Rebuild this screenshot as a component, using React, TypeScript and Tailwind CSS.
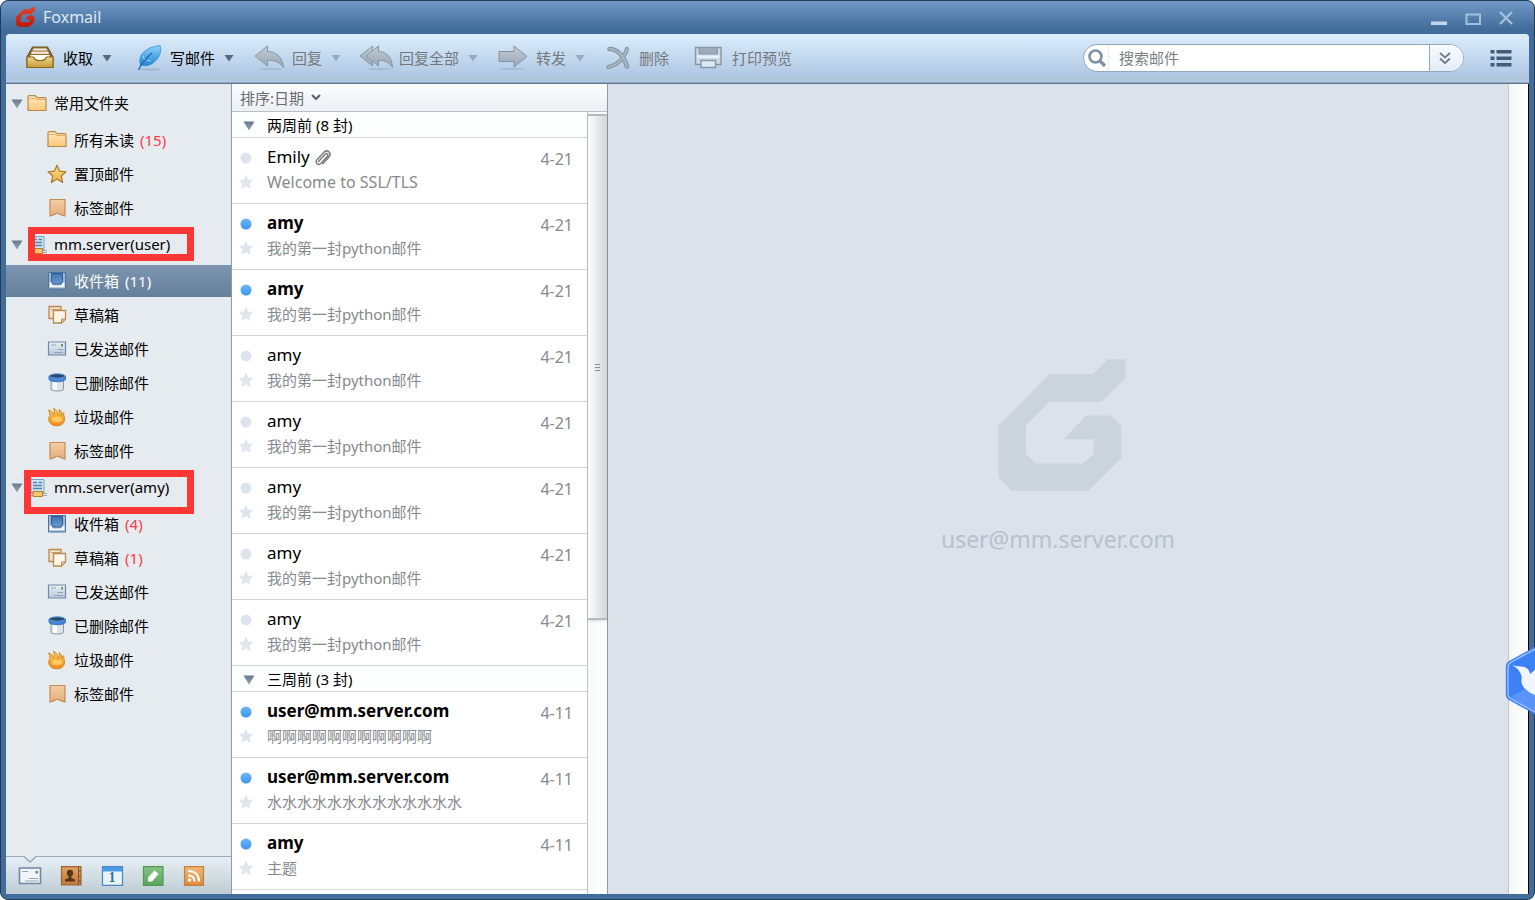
import type { ReactNode } from "react";

const LOGO_PATH =
  "M450 102H580L625 57H678V113L606 184H450L380 255V340L410 369H550L583 340V296H493L560 225H633L665 255V354L566 450H338L298 410V255Z";

function SharedGradients() {
  const stops: [string, string, string][] = [
    ["g-red", "#e8412a", "#c01808"],
    ["g-folder", "#ffe9bd", "#fbc67c"],
    ["g-tag", "#f2cda4", "#e6ae7c"],
    ["g-star", "#fde08c", "#e9b248"],
    ["g-gold", "#efd885", "#c59a3a"],
    ["g-feather", "#8fd2f8", "#1f86d6"],
    ["g-gray", "#c2ccd6", "#98a5b3"],
    ["g-blue", "#3f74b0", "#6a9bd0"],
    ["g-card", "#e9f0f7", "#b8c9dc"],
    ["g-fire", "#fbd04e", "#f08a1c"],
    ["g-dot", "#6db6f8", "#3f95ee"],
    ["g-caret", "#66798b", "#93a4b4"],
    ["g-orange", "#f0b878", "#dc8c3e"],
    ["g-brown", "#dca066", "#c07b3c"],
    ["g-green", "#86c483", "#5ba65c"],
  ];
  return (
    <svg width="0" height="0" className="absolute" aria-hidden="true">
      <defs>
        {stops.map(([id, a, b]) => (
          <linearGradient key={id} id={id} x1="0" y1="0" x2="0" y2="1">
            <stop offset="0" stopColor={a} />
            <stop offset="1" stopColor={b} />
          </linearGradient>
        ))}
      </defs>
    </svg>
  );
}

function Svg({ w, h, children }: { w: number; h: number; children: ReactNode }) {
  return (
    <svg width={w} height={h} viewBox={`0 0 ${w} ${h}`} fill="none" className="shrink-0" aria-hidden="true">
      {children}
    </svg>
  );
}

const Caret = ({ faded = false }: { faded?: boolean }) => (
  <Svg w={10} h={8}>
    <path d="M0.500 1H9.500L5 7.500Z" fill={faded ? "#93acc5" : "#52697f"} />
  </Svg>
);

const TreeCaret = () => (
  <Svg w={12} h={10}>
    <path d="M0.500 0.500H11.500L6 9.500Z" fill="url(#g-caret)" />
  </Svg>
);

/* ---------- toolbar icons ---------- */

const ReceiveIcon = () => (
  <Svg w={30} h={26}>
    <path d="M7.500 2H22.500L28 12V22.500H2V12Z" fill="#8f6a34" stroke="#7a5826" strokeWidth="1.200" strokeLinejoin="round" />
    <path d="M8.500 3.500H21.500L22.500 5.500H7.500Z" fill="#f6efe4" />
    <path d="M7 6.500H23L24 9H6Z" fill="#f3dfd0" />
    <path d="M5.500 10H24.500V16H5.500Z" fill="#fffaf2" />
    <path d="M2 12H8.500C10 17 20 17 21.500 12H28V22.500H2Z" fill="url(#g-gold)" stroke="#8d6722" strokeWidth="1.200" strokeLinejoin="round" />
  </Svg>
);

const FeatherIcon = () => (
  <Svg w={30} h={28}>
    <ellipse cx="18" cy="25.500" rx="11" ry="1.200" fill="#8fa9c4" opacity=".6" />
    <path d="M8.500 21C5.500 12 12 3.500 28 1.500C30.500 7 27 15 21 19C18 21.500 13 22.500 8.500 21Z" fill="url(#g-feather)" stroke="#3b8fcf" strokeWidth=".8" />
    <path d="M6.500 26C9 20 14 14 20 9" stroke="#1d69ad" strokeWidth="1.400" />
    <path d="M11 12L12.500 15.500M19 17L15 16.500" stroke="#bfe6fb" strokeWidth=".8" />
  </Svg>
);

const ReplyIcon = () => (
  <Svg w={30} h={26}>
    <ellipse cx="17" cy="24" rx="11" ry="1" fill="#8fa9c4" opacity=".5" />
    <path d="M1 11L13.500 1V6.500C21 6.500 28.500 11 29.500 22.500C25 16 19.500 15.500 13.500 15.500V21Z" fill="url(#g-gray)" stroke="#8998a8" strokeLinejoin="round" />
  </Svg>
);

const ReplyAllIcon = () => (
  <svg width="34" height="26" viewBox="0 0 34 26" fill="none" className="-mx-0.5 shrink-0" aria-hidden="true">
    <ellipse cx="20" cy="24" rx="12" ry="1" fill="#8fa9c4" opacity=".5" />
    <path d="M1 11L13.500 1V21Z" fill="url(#g-gray)" stroke="#8998a8" strokeLinejoin="round" />
    <path d="M7 11L19.500 1V6.500C27 6.500 33 11.500 33.500 22.500C29 16 25 15.500 19.500 15.500V21Z" fill="url(#g-gray)" stroke="#8998a8" strokeLinejoin="round" />
  </svg>
);

const ForwardIcon = () => (
  <Svg w={30} h={26}>
    <ellipse cx="14" cy="24" rx="12" ry="1" fill="#8fa9c4" opacity=".5" />
    <path d="M1 6.500H16V1L29 11.500L16 22V16.500H1Z" fill="url(#g-gray)" stroke="#8594a4" />
  </Svg>
);

const DeleteIcon = () => (
  <Svg w={26} h={26}>
    <path d="M4.500 4C13 4 19 12 22 21.500" stroke="#8292a2" strokeWidth="4.600" strokeLinecap="round" />
    <path d="M22 4C19 14 12 20 3.500 22" stroke="#8292a2" strokeWidth="4.200" strokeLinecap="round" />
    <path d="M4.500 4C13 4 19 12 22 21.500M22 4C19 14 12 20 3.500 22" stroke="#a5b2bf" strokeWidth="2.600" strokeLinecap="round" />
  </Svg>
);

const PrintIcon = () => (
  <Svg w={34} h={26}>
    <path d="M5.500 2.500H31V19.500H5.500Z" fill="#cbd8e5" stroke="#8797a8" strokeWidth="1.400" />
    <path d="M9 2.500H27.500V9H9Z" fill="#9dacb8" stroke="#8797a8" />
    <path d="M7 10.500H29.500V13H7Z" fill="#e9f1f8" />
    <path d="M11 15.500H25.500V22.500H11Z" fill="#dce8f4" stroke="#8797a8" strokeWidth="1.400" />
  </Svg>
);

/* ---------- tree icons ---------- */

const FolderIcon = () => (
  <Svg w={20} h={18}>
    <path d="M1 15.500V2C1 1 1.500 .7 2.500 .7H8L10 2.700H18C18.700 2.700 19 3 19 3.700V15.500Z" fill="url(#g-folder)" stroke="#ba8a4a" strokeWidth="1.200" />
    <path d="M2 3.500H8.500L9.500 4.500H18" stroke="#e2b06c" />
  </Svg>
);

const StarIcon = () => (
  <Svg w={20} h={20}>
    <path d="M10 1.200L12.600 7.200L19 7.800L14.200 12L15.700 18.500L10 15.100L4.300 18.500L5.800 12L1 7.800L7.400 7.200Z" fill="url(#g-star)" stroke="#a97a33" strokeWidth="1.200" strokeLinejoin="round" />
  </Svg>
);

const TagIcon = () => (
  <Svg w={20} h={20}>
    <path d="M3 1.500H18V18C15 17.500 13 16 10.500 15C8 16 6 17.500 3 18Z" fill="url(#g-tag)" stroke="#c48c58" strokeWidth="1.200" />
  </Svg>
);

const InboxIcon = () => (
  <Svg w={20} h={20}>
    <path d="M1.500 1.500H18.500V18H1.500Z" fill="#9db8d6" stroke="#4a739f" />
    <path d="M4.500 2.500H15.500V10.500L14 13H6L4.500 10.500Z" fill="url(#g-blue)" stroke="#2f5c90" />
    <path d="M2.500 11.500H4L6 14.500H14L16 11.500H17.500V16.500H2.500Z" fill="#f3f7fb" />
    <path d="M3 16.500H17" stroke="#b7c8da" />
  </Svg>
);

const DraftIcon = () => (
  <Svg w={20} h={20}>
    <path d="M2 1.500H14V13.500H2Z" fill="#f3e0c6" stroke="#b98a52" strokeWidth="1.300" />
    <path d="M4 4.500H14" stroke="#c9a070" />
    <path d="M6.500 5.500H18.500V14L14.500 18H6.500Z" fill="#fdf5e8" stroke="#b98a52" strokeWidth="1.300" />
    <path d="M14.500 18V14H18.500Z" fill="#efd4ad" stroke="#b98a52" />
  </Svg>
);

const SentIcon = () => (
  <Svg w={20} h={20}>
    <path d="M1.500 3H18.500V16H1.500Z" fill="url(#g-card)" stroke="#7187a3" strokeWidth="1.200" />
    <path d="M4 6H9M10.500 10.500H16M7 13.500H16" stroke="#8fa3bb" strokeWidth="1.200" />
    <path d="M14 5H16V7.500H14Z" fill="#4ea46a" />
  </Svg>
);

const TrashIcon = () => (
  <Svg w={20} h={20}>
    <path d="M4 7H16.500V16.500C14.500 18.500 6 18.500 4 16.500Z" fill="#dfe4e8" stroke="#8a98a4" />
    <path d="M8 9V17" stroke="#fff" strokeWidth="4" />
    <path d="M2 3H18.500V6.500C16 9.500 4.500 9.500 2 6.500Z" fill="#4586d8" stroke="#2c66b4" strokeWidth=".8" />
    <ellipse cx="10.250" cy="3" rx="7.800" ry="2.200" fill="#294971" stroke="#5c97de" />
  </Svg>
);

const FireIcon = () => (
  <Svg w={20} h={20}>
    <path d="M4.500 17.500C1 14.500 1 11 3 8.500C2.500 6.500 2.500 4.500 1.500 3C4.500 3.500 6 6 6.500 8C7.500 6 7.500 3.500 6.500 1.200C10 3 11 6 11 8.500C12.500 6.500 12.500 4.500 12 2.500C14.500 4 15 6 14.500 8.500C15.500 7.500 16 6 17 5.500C16 8 17.500 9 17.500 12C17.500 14.500 16.500 16.500 14.500 17.800C12 19.200 7 19.200 4.500 17.500Z" fill="url(#g-fire)" stroke="#c98526" strokeWidth=".9" />
    <ellipse cx="10" cy="12.500" rx="5" ry="2.800" fill="#ffe58a" opacity=".6" />
  </Svg>
);

const ServerIcon = () => (
  <Svg w={20} h={20}>
    <path d="M4 1.500H17V14.500H4Z" fill="#cfe3f2" stroke="#7fa0bd" />
    <path d="M6 4.500H10M11.500 4.500H15M6 7.500H15M6 10.500H15" stroke="#5685b0" strokeWidth="1.300" />
    <path d="M1 15.500H20M1 17.500H20" stroke="#9aa7b3" />
    <path d="M6 13.500H15.500V18.500H6Z" fill="#f6c46c" stroke="#b67d2a" />
  </Svg>
);

/* ---------- data ---------- */

type Leaf = { label: string; icon: ReactNode; count?: number; selected?: boolean };

const mailbox = (inbox: number, drafts?: number, selected = false): Leaf[] => [
  { label: "收件箱", icon: <InboxIcon />, count: inbox, selected },
  { label: "草稿箱", icon: <DraftIcon />, count: drafts },
  { label: "已发送邮件", icon: <SentIcon /> },
  { label: "已删除邮件", icon: <TrashIcon /> },
  { label: "垃圾邮件", icon: <FireIcon /> },
  { label: "标签邮件", icon: <TagIcon /> },
];

const groups: { title: string; icon: ReactNode; frame?: string; items: Leaf[] }[] = [
  {
    title: "常用文件夹",
    icon: <FolderIcon />,
    items: [
      { label: "所有未读", icon: <FolderIcon />, count: 15 },
      { label: "置顶邮件", icon: <StarIcon /> },
      { label: "标签邮件", icon: <TagIcon /> },
    ],
  },
  { title: "mm.server(user)", icon: <ServerIcon />, frame: "left-[22px] top-0.5 h-[34px] w-[166px]", items: mailbox(11, undefined, true) },
  { title: "mm.server(amy)", icon: <ServerIcon />, frame: "left-[18px] top-0.5 h-11 w-[170px]", items: mailbox(4, 1) },
];

type Mail = { from: string; subject: string; date: string; unread?: boolean; clip?: boolean };

const first = "我的第一封python邮件";
const sections: { title: string; mails: Mail[] }[] = [
  {
    title: "两周前 (8 封)",
    mails: [
      { from: "Emily", subject: "Welcome to SSL/TLS", date: "4-21", clip: true },
      { from: "amy", subject: first, date: "4-21", unread: true },
      { from: "amy", subject: first, date: "4-21", unread: true },
      { from: "amy", subject: first, date: "4-21" },
      { from: "amy", subject: first, date: "4-21" },
      { from: "amy", subject: first, date: "4-21" },
      { from: "amy", subject: first, date: "4-21" },
      { from: "amy", subject: first, date: "4-21" },
    ],
  },
  {
    title: "三周前 (3 封)",
    mails: [
      { from: "user@mm.server.com", subject: "啊啊啊啊啊啊啊啊啊啊啊", date: "4-11", unread: true },
      { from: "user@mm.server.com", subject: "水水水水水水水水水水水水水", date: "4-11", unread: true },
      { from: "amy", subject: "主题", date: "4-11", unread: true },
    ],
  },
];

const actions: { label: string; icon: ReactNode; caret: boolean; enabled?: boolean }[] = [
  { label: "收取", icon: <ReceiveIcon />, caret: true, enabled: true },
  { label: "写邮件", icon: <FeatherIcon />, caret: true, enabled: true },
  { label: "回复", icon: <ReplyIcon />, caret: true },
  { label: "回复全部", icon: <ReplyAllIcon />, caret: true },
  { label: "转发", icon: <ForwardIcon />, caret: true },
  { label: "删除", icon: <DeleteIcon />, caret: false },
  { label: "打印预览", icon: <PrintIcon />, caret: false },
];

/* ---------- regions ---------- */

function TitleBar() {
  return (
    <header className="flex h-[33px] shrink-0 items-center pr-[15px] pb-0.5 pl-2.5">
      <svg width="19" height="20" viewBox="290 50 396 408" className="mr-2" aria-hidden="true">
        <path d={LOGO_PATH} fill="url(#g-red)" stroke="url(#g-red)" strokeWidth="16" strokeLinejoin="round" />
      </svg>
      <h1 className="flex-1 text-base leading-6 text-[#dfe9f4]">Foxmail</h1>
      <div className="flex items-center gap-4 pt-0.5">
        <button type="button" aria-label="最小化">
          <Svg w={18} h={18}>
            <path d="M1 12.500H17V16H1Z" fill="#c3d5e8" />
          </Svg>
        </button>
        <button type="button" aria-label="最大化">
          <Svg w={18} h={18}>
            <path d="M2.500 5.500H16V15H2.500Z" stroke="#a3bfdc" strokeWidth="2" />
          </Svg>
        </button>
        <button type="button" aria-label="关闭">
          <Svg w={16} h={18}>
            <path d="M2 3L14 15M14 3L2 15" stroke="#a3bfdc" strokeWidth="2.400" />
          </Svg>
        </button>
      </div>
    </header>
  );
}

function Toolbar() {
  return (
    <div className="shrink-0 rounded-t-sm border-b border-[#61778f] bg-[#b0c8e2]">
      <div className="flex h-[45px] items-center gap-5 rounded-t-sm border-b border-[#b3c8c8] bg-linear-to-b from-[#dceefd] to-[#aec6e2] pt-1 pr-[17px] pl-[19px]">
        {actions.map((a) => (
          <button
            key={a.label}
            type="button"
            disabled={!a.enabled}
            className={`flex items-center gap-2 text-[15px] leading-6 whitespace-nowrap ${a.enabled ? "text-black" : "text-[#74777c]"}`}
          >
            {a.icon}
            <span className="pr-px">{a.label}</span>
            {a.caret && <Caret faded={!a.enabled} />}
          </button>
        ))}
        <form className="mr-1.5 ml-auto flex h-7 w-[381px] shrink items-stretch overflow-hidden rounded-full border border-[#94a8b9] bg-white" onSubmit={(e) => e.preventDefault()}>
          <label htmlFor="search" aria-label="搜索邮件" className="flex w-[25px] items-center justify-center border-r border-[#e6eff7] pl-0.5">
            <Svg w={20} h={20}>
              <circle cx="8.500" cy="8.500" r="6" stroke="#7e92a5" strokeWidth="2.600" />
              <path d="M12.500 12.500L18 18" stroke="#7e92a5" strokeWidth="3.200" />
            </Svg>
          </label>
          <input id="search" type="text" placeholder="搜索邮件" className="min-w-0 flex-1 bg-white px-2.5 text-[15px] leading-6 outline-none placeholder:text-[#7b7f84]" />
          <button type="button" aria-label="搜索选项" className="flex w-[34px] items-center justify-center border-l border-[#94a8b9] bg-linear-to-b from-[#f8fbff] to-[#e3edf8] pr-1">
            <Svg w={12} h={12}>
              <path d="M1 1L6 5.500L11 1M1 6.500L6 11L11 6.500" stroke="#71808f" strokeWidth="2" />
            </Svg>
          </button>
        </form>
        <button type="button" aria-label="视图">
          <Svg w={22} h={18}>
            <path d="M0.500 1H4.500V4.500H0.500ZM6.500 1H21.500V4.500H6.500ZM0.500 7.500H4.500V11H0.500ZM6.500 7.500H21.500V11H6.500ZM0.500 14H4.500V17.500H0.500ZM6.500 14H21.500V17.500H6.500Z" fill="#435d78" />
          </Svg>
        </button>
      </div>
      <div className="h-1 border-b border-[#8fa7c0]" />
    </div>
  );
}

function Dock() {
  return (
    <div className="relative flex h-[38px] shrink-0 items-center gap-[17px] border-t border-[#97aab5] bg-linear-to-b from-[#e6eff5] to-[#bfccd3] pl-3">
      <svg width="12" height="7" viewBox="0 0 12 7" className="absolute -top-px left-[18px]" aria-hidden="true">
        <path d="M0 0L6 6L12 0Z" fill="#e6ebef" />
        <path d="M0 .5L6 6L12 .5" fill="none" stroke="#97aab5" strokeWidth="1.400" />
      </svg>
      <button type="button" aria-label="邮件">
        <Svg w={24} h={20}>
          <path d="M1.500 2H22.500V17.500H1.500Z" fill="#f1f5f9" stroke="#7186a1" strokeWidth="1.600" />
          <path d="M4 5.500H10M11 12.500H20M7 15H20" stroke="#93a6bc" strokeWidth="1.200" />
          <path d="M17.500 5H20V7.500H17.500Z" fill="#3f9c60" />
        </Svg>
      </button>
      <button type="button" aria-label="通讯录">
        <Svg w={24} h={20}>
          <path d="M2.500 .7H22V19H2.500Z" fill="url(#g-brown)" stroke="#9c6433" strokeWidth="1.200" />
          <path d="M19.500 1V19M22 5H20M22 10H20M22 15H20" stroke="#84502a" />
          <circle cx="11" cy="7" r="3.200" fill="#5b3317" />
          <path d="M6 15.500V13.500L9.500 12V9.500H12.500V12L16 13.500V15.500Z" fill="#5b3317" />
        </Svg>
      </button>
      <button type="button" aria-label="日历" className="relative">
        <Svg w={24} h={20}>
          <path d="M2.500 .7H22.500V19.300H2.500Z" fill="#e9f2f9" stroke="#4a86bd" strokeWidth="1.200" />
          <path d="M3 1H22V5.500H3Z" fill="#4c9be6" />
        </Svg>
        <span className="absolute inset-x-0 top-1.5 font-[Liberation_Serif,serif] text-sm leading-3 font-bold text-[#2b73a8]">1</span>
      </button>
      <button type="button" aria-label="便笺">
        <Svg w={24} h={20}>
          <path d="M2.500 .7H22V19.300H2.500Z" fill="url(#g-green)" stroke="#4f9a52" strokeWidth="1.200" />
          <path d="M7 15.500V11.500L13.500 4.500L17.500 8L11 15.500Z" fill="#fff" />
        </Svg>
      </button>
      <button type="button" aria-label="订阅">
        <Svg w={24} h={20}>
          <path d="M2.500 .7H21.500V19.300H2.500Z" fill="url(#g-orange)" stroke="#c5803b" strokeWidth="1.200" />
          <circle cx="7.500" cy="14" r="1.800" fill="#fff" />
          <path d="M6 9.500C10 9.500 12.500 11.500 12.500 15.500M6 5C13 5 17 9 17 15.500" stroke="#fff" strokeWidth="2.200" />
        </Svg>
      </button>
    </div>
  );
}

function Sidebar() {
  return (
    <aside className="flex w-[226px] shrink-0 flex-col border-r border-[#8e9aa4] bg-[#e6ebef]">
      <nav className="min-h-0 flex-1 overflow-hidden text-[15px] leading-6" aria-label="文件夹">
        {groups.map((g) => (
          <section key={g.title}>
            <div className="relative flex h-[39px] items-center pl-[5px]">
              <button type="button" className="flex items-center gap-1">
                <TreeCaret />
                {g.icon}
                <span className="pb-0.5 pl-[3px] leading-6">{g.title}</span>
              </button>
              {g.frame && <div className={`pointer-events-none absolute z-10 border-[7px] border-[#fd3636] ${g.frame}`} />}
            </div>
            <ul>
              {g.items.map((it) => (
                <li key={it.label} className="flex h-[34px] items-center">
                  <a
                    href="#"
                    className={`flex h-8 w-full items-center pl-[41px] ${it.selected ? "bg-linear-to-b from-[#7d95b0] to-[#64809a] text-white" : "text-black"}`}
                  >
                    {it.icon}
                    <span className="pl-[7px]">{it.label}</span>
                    {it.count !== undefined && <span className={`pl-1.5 ${it.selected ? "text-white" : "text-[#fb3a4e]"}`}>({it.count})</span>}
                  </a>
                </li>
              ))}
            </ul>
          </section>
        ))}
      </nav>
      <Dock />
    </aside>
  );
}

function MailRow({ mail }: { mail: Mail }) {
  return (
    <li className="grid h-[66px] grid-cols-[28px_1fr_auto] content-start items-center gap-x-[7px] border-b border-[#d3d5d8] pt-[7px] pr-3.5">
      <span className="flex justify-center pt-0.5">
        <Svg w={12} h={12}>
          <circle cx="6" cy="6" r="5.500" fill={mail.unread ? "url(#g-dot)" : "#dce5ee"} />
        </Svg>
      </span>
      <span className={`flex items-center gap-1 text-[17px] leading-6 text-black ${mail.unread ? "font-bold" : ""}`}>
        {mail.from}
        {mail.clip && (
          <span className="pt-0.5">
            <Svg w={18} h={18}>
              <path
                d="M4.500 12.500L11.200 5.200C12.800 3.600 15 5.600 13.500 7.300L6.800 14.500C4.300 17 .4 13.700 2.800 11L10.200 3C13.300 .2 18.200 4 15.200 7.800L9 14.600"
                stroke="#7d7d7d"
                strokeWidth="1.500"
                strokeLinecap="round"
              />
            </Svg>
          </span>
        )}
      </span>
      <time className="pt-1 text-base leading-5 text-[#86898d]">{mail.date}</time>
      <button type="button" aria-label="加星标" className="flex justify-center">
        <Svg w={16} h={16}>
          <path d="M8 .5L10.200 5.500L15.500 6L11.500 9.600L12.700 15L8 12.200L3.300 15L4.500 9.600L.5 6L5.800 5.500Z" fill="#dfe6ee" />
        </Svg>
      </button>
      <span className={`leading-[26px] text-[#86898d] ${/^[ -~]+$/.test(mail.subject) ? "text-base" : "text-[15px]"}`}>{mail.subject}</span>
    </li>
  );
}

function MailList() {
  return (
    <section className="flex w-[376px] shrink-0 flex-col border-r border-[#8e9aa4] bg-white">
      <button type="button" className="flex h-7 shrink-0 items-center gap-[7px] border-b border-[#b9c0c6] bg-linear-to-b from-[#fbfcfe] to-[#eceff3] px-2 text-[15px] leading-6 text-[#686c70]">
        排序:日期
        <Svg w={10} h={10}>
          <path d="M1 2L5 6L9 2" stroke="#5d6670" strokeWidth="2.200" />
        </Svg>
      </button>
      <div className="flex min-h-0 flex-1">
        <div className="min-w-0 flex-1 overflow-hidden">
          {sections.map((s) => (
            <section key={s.title}>
              <h2 className="border-b border-[#d3d5d8] bg-[#fdfefe] text-[15px] leading-[25px] text-black">
                <button type="button" className="flex h-[25px] items-center gap-3 pt-0.5 pl-[11px]">
                  <TreeCaret />
                  {s.title}
                </button>
              </h2>
              <ul>
                {s.mails.map((m, i) => (
                  <MailRow key={i} mail={m} />
                ))}
              </ul>
            </section>
          ))}
        </div>
        <div className="w-5 shrink-0 border-l border-[#bcc2c9] bg-linear-to-r from-[#f6f9f9] to-white pt-0.5">
          <div className="flex h-[506px] items-center justify-center border-y-2 border-[#b4bac1] bg-linear-to-r from-[#fdfdfe] to-[#d2d5da] shadow-sm">
            <Svg w={5} h={7}>
              <path d="M0 .5H5M0 3.500H5M0 6.500H5" stroke="#8a9097" />
            </Svg>
          </div>
        </div>
      </div>
    </section>
  );
}

function Reader() {
  return (
    <main className="flex min-w-0 flex-1 bg-[#dbe2e9]">
      <div className="flex flex-1 flex-col items-center justify-center gap-8 pb-16">
        <svg width="128" height="132" viewBox="297 56 382 395" className="ml-2" aria-hidden="true">
          <path d={LOGO_PATH} fill="#cbd3dd" />
        </svg>
        <p className="text-[23px] leading-8 text-[#b8c1ce]">user@mm.server.com</p>
      </div>
      <div className="w-5 shrink-0 border-l border-[#c3c7c9] bg-linear-to-r from-[#f5f8f7] to-white" />
      <div className="w-px shrink-0 bg-black" />
    </main>
  );
}

function BirdBadge() {
  return (
    <button type="button" aria-label="迅雷" className="absolute top-[645px] -right-9 z-20">
      <svg width="66" height="72" viewBox="0 0 66 72" fill="none" aria-hidden="true">
        <path d="M4 16L30 1.800Q33 .5 36 1.800L62 16Q65 18 65 22V49Q65 53 62 55L36 69.500Q33 71 30 69.500L4 55Q.8 53 .8 49V22Q.8 18 4 16Z" fill="#3d81f7" />
        <path d="M5.500 17.500L30 4Q33 2.500 36 4L60 17.500Q63 19 63 22V49Q63 52 60 53.500L36 67Q33 68.500 30 67L5.500 53.500Q3 52 3 49V22Q3 19 5.500 17.500Z" stroke="#a9cbff" strokeWidth="1.200" />
        <path d="M4.500 52.500L19 44.500L32 50V67Z" fill="#6fa0f8" opacity=".6" />
        <path d="M7 20C12 22 18 20.500 21.500 23C24 24.500 24 26.500 25.500 29C27.500 27 29 25 34 23V51C27 50 17 44 16.500 37C16.300 34 17 33 16.500 31C15 25.500 12 23 7 20Z" fill="#f0f5ff" />
      </svg>
    </button>
  );
}

export default function App() {
  return (
    <div className="relative overflow-hidden text-black">
      <div className="flex h-screen min-h-[640px] flex-col overflow-hidden rounded-lg border border-[#223c58] bg-[#426c9a] bg-[linear-gradient(#7299c8,#426c9a_28px)] px-[5px] pb-[5px] font-['Noto_Sans','Noto_Sans_CJK_SC',sans-serif]">
        <SharedGradients />
        <TitleBar />
        <Toolbar />
        <div className="flex min-h-0 flex-1">
          <Sidebar />
          <MailList />
          <Reader />
        </div>
      </div>
      <BirdBadge />
    </div>
  );
}
